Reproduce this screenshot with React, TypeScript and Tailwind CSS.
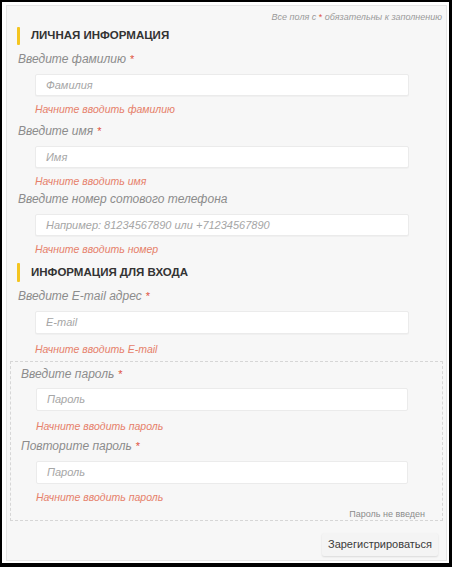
import React from 'react';

const FONT = { fontFamily: '"Liberation Sans", Arial, sans-serif' };

interface FieldProps {
    label: string;
    placeholder: string;
    error: string;
    required?: boolean;
    labelGap?: string;
    errorGap?: string;
    inputH?: string;
}

const Star = () => <span className="not-italic text-[#e0533f] align-top text-[11px] ml-[4px]">*</span>;

const Field: React.FC<FieldProps> = ({ label, placeholder, error, required, labelGap = 'mt-[6px]', errorGap = 'mt-[4px]', inputH = 'h-[22px]' }) => (
    <div>
        <div className="h-[18px] leading-[18px] text-[12px] italic text-[#8c8c8c]">
            {label}
            {required && <Star />}
        </div>
        <div className={`${labelGap} ${inputH} ml-[17px] mr-[37px] bg-white border border-[#ebebeb] rounded-[2px] flex items-center pl-[10px] text-[11px] italic text-[#a6a6a6] shadow-[0_1px_1px_rgba(0,0,0,0.03)]`}>
            {placeholder}
        </div>
        <div className={`${errorGap} ml-[17px] h-[18px] leading-[18px] text-[10.5px] italic text-[#e6806a]`}>{error}</div>
    </div>
);

const Heading: React.FC<{ title: string; h?: string }> = ({ title, h = 'h-[18px]' }) => (
    <div className={`flex items-center ${h}`}>
        <div className={`w-[3px] ${h} bg-[#f4c520] ml-[10px] rounded-[1px]`} />
        <div className="ml-[11px] text-[11.5px] font-bold text-[#333] uppercase">{title}</div>
    </div>
);

export default function App() {
    return (
        <div className="w-[452px] h-[567px] bg-black pt-[2px] pl-[2px] pr-[3px] pb-[4px]" style={FONT}>
            <div className="w-full h-full bg-white pt-[3px] pl-[4px] pr-[2px] pb-[2px]">
                <div className="h-full border border-[#e6e6e6] bg-[#f7f7f7] flex flex-col">
                    {/* note */}
                    <div className="mt-[5px] h-[12px] leading-[12px] text-right pr-[4px] text-[9px] italic text-[#9a9a9a]">
                        Все поля с <span className="text-[#e0533f] not-italic align-top">*</span> обязательны к заполнению
                    </div>

                    <div className="mt-[4px]">
                        <Heading title="Личная информация" />
                    </div>

                    <div className="pl-[11px] mt-[5px]">
                        <Field label="Введите фамилию" required placeholder="Фамилия" error="Начните вводить фамилию" />
                        <div className="mt-[4px]">
                            <Field label="Введите имя" required placeholder="Имя" error="Начните вводить имя" />
                        </div>
                        <Field label="Введите номер сотового телефона" placeholder="Например: 81234567890 или +71234567890" error="Начните вводить номер" />
                    </div>

                    <div className="mt-[5px]">
                        <Heading title="Информация для входа" h="h-[19px]" />
                    </div>

                    <div className="pl-[11px] mt-[5px]">
                        <Field label="Введите E-mail адрес" required placeholder="E-mail" error="Начните вводить E-mail" inputH="h-[23px]" errorGap="mt-[6px]" />
                    </div>

                    {/* password block */}
                    <div className="mt-[3px] mx-[3px] border border-dashed border-[#d6d6d6] pl-[10px] pt-[3px]">
                        <div className="h-[18px] leading-[18px] text-[12px] italic text-[#8c8c8c]">
                            Введите пароль<Star />
                        </div>
                        <div className="mt-[5px] h-[23px] ml-[15px] mr-[34px] bg-white border border-[#ebebeb] rounded-[2px] flex items-center pl-[10px] text-[11px] italic text-[#a6a6a6]">
                            Пароль
                        </div>
                        <div className="mt-[6px] ml-[15px] h-[18px] leading-[18px] text-[10.5px] italic text-[#e6806a]">Начните вводить пароль</div>

                        <div className="mt-[2px] h-[18px] leading-[18px] text-[12px] italic text-[#8c8c8c]">
                            Повторите пароль<Star />
                        </div>
                        <div className="mt-[6px] h-[23px] ml-[15px] mr-[34px] bg-white border border-[#ebebeb] rounded-[2px] flex items-center pl-[10px] text-[11px] italic text-[#a6a6a6]">
                            Пароль
                        </div>
                        <div className="mt-[4px] ml-[15px] h-[18px] leading-[18px] text-[10.5px] italic text-[#e6806a]">Начните вводить пароль</div>

                        <div className="mt-[3px] h-[10px] leading-[10px] text-right pr-[17px] text-[9px] text-[#8c8c8c]">Пароль не введен</div>
                        <div className="h-[1px]" />
                    </div>

                    <div className="mt-[12px] flex justify-end pr-[8px]">
                        <div className="h-[23px] px-[6px] flex items-center bg-[#f4f4f4] rounded-[2px] shadow-[0_1px_2px_rgba(0,0,0,0.12)] text-[11px] text-[#3a3a3a]">
                            Зарегистрироваться
                        </div>
                    </div>
                </div>
            </div>
        </div>
    );
}
